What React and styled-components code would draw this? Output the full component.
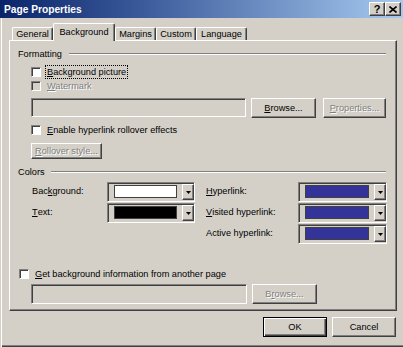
import React from 'react'
import styled, { createGlobalStyle } from 'styled-components'

const GlobalStyle = createGlobalStyle`
  html, body {
    margin: 0;
    padding: 0;
    background: #d4d0c8;
  }
  body {
    font-family: "Liberation Sans", Arial, sans-serif;
    font-size: 9.2px;
    color: #000;
  }
  * {
    box-sizing: border-box;
  }
`

const Window = styled.div`
  width: 403px;
  height: 347px;
  display: flex;
  flex-direction: column;
  background: #d4d0c8;
  box-shadow: inset 0 -1px #404040, inset 0 -2px #808080;
  overflow: hidden;
`

const TitleBar = styled.div`
  height: 18px;
  flex: none;
  display: flex;
  align-items: center;
  justify-content: space-between;
  padding-left: 4px;
  background: linear-gradient(to right, #0a246a 0%, #3a5a9a 35%, #a6caf0 100%);
`

const Title = styled.span`
  color: #fff;
  font-weight: bold;
  font-size: 10.2px;
`

const TitleButtons = styled.div`
  display: flex;
  margin-right: 2px;
`

const TitleButton = styled.div`
  width: 16px;
  height: 14px;
  display: flex;
  align-items: center;
  justify-content: center;
  background: #d4d0c8;
  border: 1px solid;
  border-color: #fff #404040 #404040 #fff;
  box-shadow: inset -1px -1px #808080;
  font-weight: bold;
  font-size: 11px;
  line-height: 1;
`

const Body = styled.div`
  flex: 1;
  padding: 5px 6px 0 8px;
  border-left: 1px solid #d4d0c8;
  box-shadow: inset 1px 0 #fff;
`

const TabStrip = styled.div`
  height: 17px;
  display: flex;
  align-items: flex-end;
  margin-left: 3px;
  position: relative;
  z-index: 1;
`

const Tab = styled.div`
  width: ${p => p.$w}px;
  height: ${p => (p.$active ? 18 : 13)}px;
  margin-bottom: ${p => (p.$active ? -1 : 0)}px;
  display: flex;
  align-items: ${p => (p.$active ? 'flex-start' : 'center')};
  justify-content: center;
  padding-top: ${p => (p.$active ? 3 : 0)}px;
  background: #d4d0c8;
  border-top: 1px solid #fff;
  border-left: 1px solid #fff;
  border-right: 1px solid #404040;
  box-shadow: inset -1px 0 #808080;
  border-radius: 2px 2px 0 0;
  white-space: nowrap;
`

const Panel = styled.div`
  width: 388px;
  height: 271px;
  border: 1px solid;
  border-color: #fff #404040 #404040 #fff;
  box-shadow: inset -1px -1px #808080;
  padding: 7px 10px 0 8px;
`

const SectionHeader = styled.div`
  height: 12px;
  display: flex;
  align-items: center;
  gap: ${p => p.$gap || 6}px;
  margin-top: ${p => p.$top || 0}px;
`

const Rule = styled.div`
  flex: 1;
  height: 2px;
  border-top: 1px solid #808080;
  border-bottom: 1px solid #fff;
`

const CheckRow = styled.div`
  height: 14px;
  display: flex;
  align-items: center;
  gap: 4px;
  padding-left: ${p => p.$indent ?? 13}px;
  margin-top: ${p => p.$top || 0}px;
  color: ${p => (p.$disabled ? '#808080' : '#000')};
  text-shadow: ${p => (p.$disabled ? '1px 1px #fff' : 'none')};
`

const Checkbox = styled.div`
  width: 10px;
  height: 10px;
  flex: none;
  margin-right: 1px;
  background: ${p => (p.$disabled ? '#d4d0c8' : '#fff')};
  border: 1px solid;
  border-color: #808080 #fff #fff #808080;
  box-shadow: inset 1px 1px #404040;
`

const CheckLabel = styled.span`
  padding: 1px 1px;
  outline: ${p => (p.$focused ? '1px dotted #000' : 'none')};
  white-space: nowrap;
`

const FieldRow = styled.div`
  display: flex;
  align-items: flex-start;
  padding-left: 13px;
  margin-top: ${p => p.$top || 0}px;
`

const Field = styled.div`
  width: ${p => p.$w}px;
  height: ${p => p.$h || 19}px;
  background: #d4d0c8;
  border: 1px solid;
  border-color: #808080 #fff #fff #808080;
  box-shadow: inset 1px 1px #404040, inset -1px -1px #d4d0c8;
`

const Button = styled.div`
  width: ${p => p.$w}px;
  height: ${p => p.$h || 20}px;
  margin-left: ${p => p.$ml || 0}px;
  flex: none;
  display: flex;
  align-items: center;
  justify-content: center;
  background: #d4d0c8;
  border: 1px solid;
  border-color: ${p => (p.$default ? '#000' : '#fff #404040 #404040 #fff')};
  box-shadow: ${p =>
    p.$default
      ? 'inset 1px 1px #fff, inset -1px -1px #404040, inset -2px -2px #808080'
      : 'inset -1px -1px #808080'};
  color: ${p => (p.$disabled ? '#808080' : '#000')};
  text-shadow: ${p => (p.$disabled ? '1px 1px #fff' : 'none')};
  white-space: nowrap;
`

const ColorGrid = styled.div`
  display: grid;
  grid-template-columns: 75px 99px 92px 89px;
  grid-auto-rows: 21px;
  align-items: start;
  padding-left: 14px;
  margin-top: 4px;
`

const GridLabel = styled.span`
  height: 20px;
  display: flex;
  align-items: center;
  padding-bottom: 2px;
  white-space: nowrap;
`

const Dropdown = styled.div`
  width: ${p => p.$w}px;
  height: 20px;
  display: flex;
  align-items: center;
  border: 1px solid;
  border-color: #808080 #fff #fff #808080;
  box-shadow: inset 1px 1px #404040;
`

const SwatchFrame = styled.div`
  flex: 1;
  align-self: stretch;
  padding: 2px 5px 3px 6px;
`

const Swatch = styled.div`
  height: 100%;
  border: 1px solid #404040;
  background: ${p => p.$color};
`

const DropButton = styled.div`
  width: 12px;
  height: 16px;
  flex: none;
  display: flex;
  align-items: center;
  justify-content: center;
  background: #d4d0c8;
  border: 1px solid;
  border-color: #fff #404040 #404040 #fff;
  box-shadow: inset -1px -1px #808080;
`

const Footer = styled.div`
  display: flex;
  justify-content: flex-end;
  gap: 5px;
  padding: 6px 1px 0 0;
`

function Arrow() {
  return (
    <svg width="5" height="3" viewBox="0 0 5 3">
      <path d="M0 0h5L2.5 3z" fill="#000" />
    </svg>
  )
}

function ColorPick({ color, w }) {
  return (
    <Dropdown $w={w}>
      <SwatchFrame>
        <Swatch $color={color} />
      </SwatchFrame>
      <DropButton>
        <Arrow />
      </DropButton>
    </Dropdown>
  )
}

export default function App() {
  return (
    <Window>
      <GlobalStyle />
      <TitleBar>
        <Title>Page Properties</Title>
        <TitleButtons>
          <TitleButton>?</TitleButton>
          <TitleButton>
            <svg width="8" height="7" viewBox="0 0 8 7">
              <path d="M0.5 0.5L7.5 6.5M7.5 0.5L0.5 6.5" stroke="#000" strokeWidth="1.6" />
            </svg>
          </TitleButton>
        </TitleButtons>
      </TitleBar>
      <Body>
        <TabStrip>
          <Tab $w={41}>General</Tab>
          <Tab $w={62} $active>Background</Tab>
          <Tab $w={41}>Margins</Tab>
          <Tab $w={40}>Custom</Tab>
          <Tab $w={51}>Language</Tab>
        </TabStrip>
        <Panel>
          <SectionHeader $gap={7}>
            <span>Formatting</span>
            <Rule />
          </SectionHeader>
          <CheckRow $top={5}>
            <Checkbox />
            <CheckLabel $focused><u>B</u>ackground picture</CheckLabel>
          </CheckRow>
          <CheckRow $disabled>
            <Checkbox $disabled />
            <CheckLabel><u>W</u>atermark</CheckLabel>
          </CheckRow>
          <FieldRow $top={5}>
            <Field $w={216} />
            <Button $w={65} $ml={5}><u>B</u>rowse...</Button>
            <Button $w={63} $ml={7} $disabled><u>P</u>roperties...</Button>
          </FieldRow>
          <CheckRow $top={5}>
            <Checkbox />
            <CheckLabel><u>E</u>nable hyperlink rollover effects</CheckLabel>
          </CheckRow>
          <FieldRow $top={6}>
            <Button $w={71} $h={16} $disabled><u>R</u>ollover style...</Button>
          </FieldRow>
          <SectionHeader $top={7}>
            <span>Colors</span>
            <Rule />
          </SectionHeader>
          <ColorGrid>
            <GridLabel>Bac<u>k</u>ground:</GridLabel>
            <ColorPick color="#fff" w={88} />
            <GridLabel><u>H</u>yperlink:</GridLabel>
            <ColorPick color="#333399" w={89} />
            <GridLabel><u>T</u>ext:</GridLabel>
            <ColorPick color="#000" w={88} />
            <GridLabel><u>V</u>isited hyperlink:</GridLabel>
            <ColorPick color="#333399" w={89} />
            <span />
            <span />
            <GridLabel>Active hyperlink:</GridLabel>
            <ColorPick color="#333399" w={89} />
          </ColorGrid>
          <CheckRow $indent={1} $top={22}>
            <Checkbox />
            <CheckLabel><u>G</u>et background information from another page</CheckLabel>
          </CheckRow>
          <FieldRow $top={3}>
            <Field $w={216} $h={20} />
            <Button $w={65} $ml={5} $disabled>B<u>r</u>owse...</Button>
          </FieldRow>
        </Panel>
        <Footer>
          <Button $w={64} $default>OK</Button>
          <Button $w={64}>Cancel</Button>
        </Footer>
      </Body>
    </Window>
  )
}
